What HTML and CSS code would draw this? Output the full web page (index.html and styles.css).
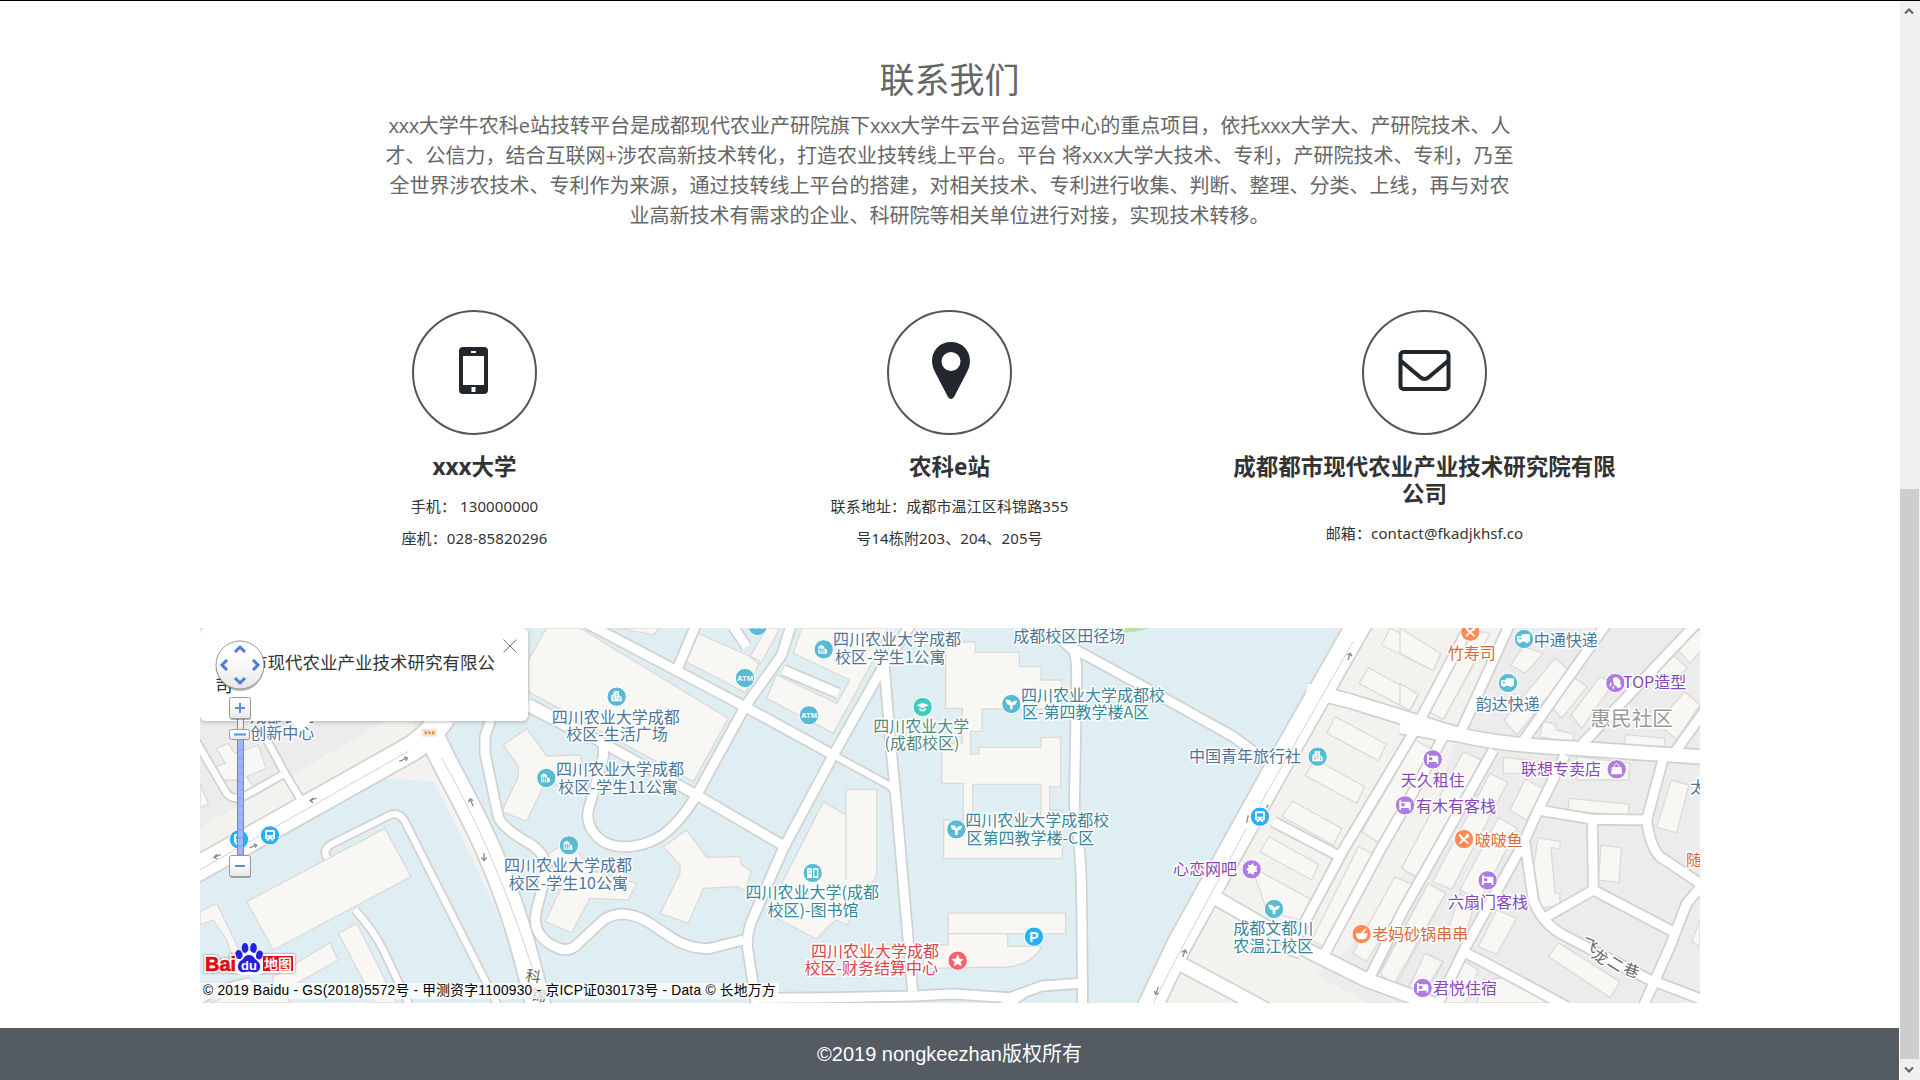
FILE: index.html
```html
<!DOCTYPE html>
<html lang="zh-CN">
<head>
<meta charset="utf-8">
<title>联系我们</title>
<link rel="stylesheet" href="styles.css">
</head>
<body>
<div class="window">
<div class="page">
  <main class="contact">
    <h1 class="contact-title">联系我们</h1>
    <p class="intro"><span class="lat">xxx</span>大学牛农科e站技转平台是成都现代农业产研院旗下<span class="lat">xxx</span>大学牛云平台运营中心的重点项目，依托<span class="lat">xxx</span>大学大、产研院技术、人<br>才、公信力，结合互联网+涉农高新技术转化，打造农业技转线上平台。平台 将xxx大学大技术、专利，产研院技术、专利，乃至<br>全世界涉农技术、专利作为来源，通过技转线上平台的搭建，对相关技术、专利进行收集、判断、整理、分类、上线，再与对农<br>业高新技术有需求的企业、科研院等相关单位进行对接，实现技术转移。</p>
    <div class="cards">
      <section class="card">
        <svg class="card-icon" viewBox="0 0 125 125"><circle cx="62.5" cy="62.5" r="61.5" class="ring"/><path class="ink" fill-rule="evenodd" d="M51 37h21q4 0 4 4v39q0 4-4 4H51q-4 0-4-4V41q0-4 4-4zM51 46v29h21V46zM59 41h5v2h-5zM59.500 77h4v5h-4z"/></svg>
        <h2 class="card-title">xxx大学</h2>
        <p class="card-text">手机： 130000000<br>座机：028-85820296</p>
      </section>
      <section class="card">
        <svg class="card-icon" viewBox="0 0 125 125"><circle cx="62.500" cy="62.500" r="61.500" class="ring"/><path class="ink" fill-rule="evenodd" d="M64 32c11 0 19 8 19 19 0 5-2 9-4 13L67 87q-3 4-6 0L49 64c-2-4-4-8-4-13 0-11 8-19 19-19zM64 42a9.500 9.500 0 1 0 0 19 9.500 9.500 0 0 0 0-19z"/></svg>
        <h2 class="card-title">农科e站</h2>
        <p class="card-text">联系地址：成都市温江区科锦路355<br>号14栋附203、204、205号</p>
      </section>
      <section class="card">
        <svg class="card-icon" viewBox="0 0 125 125"><circle cx="62.500" cy="62.500" r="61.500" class="ring"/><rect class="line-ink" x="38.500" y="42" width="48" height="37" rx="3"/><path class="line-ink" d="M39 51l19 16q4.500 4 9 0l19-16"/></svg>
        <h2 class="card-title">成都都市现代农业产业技术研究院有限<br>公司</h2>
        <p class="card-text">邮箱：contact@fkadjkhsf.co</p>
      </section>
    </div>
  </main>

  <div class="map">
    <svg class="map-canvas" viewBox="0 0 4500 1125">
      <defs>
        <g id="roads">
          <g transform="translate(-30 -24)">
            <path class="w-xl" d="M-20 770L640 400Q710 365 760 290"/>
            <path class="w-xl" d="M725 345C760 430 840 560 900 700C960 840 1000 960 1050 1180"/>
            <path class="w-s" d="M10 350L110 520Q130 545 170 525L285 460L225 350M285 460L345 560"/>
            <path class="w-s" d="M412 715Q395 690 425 672L600 585Q630 575 645 605L925 1160M495 870Q550 930 580 990L660 1160"/>
            <path class="w-s" d="M20 1150Q80 1100 180 1085M1000 258L1200 360"/>
            <path class="w-m" d="M905 290L885 350V400L925 590Q935 620 1000 660Q1060 690 1065 730L1065 770L1040 870Q1025 930 1070 965Q1130 1010 1165 970L1240 900Q1300 860 1380 910L1440 950Q1500 990 1560 985L1660 960"/>
          </g>
          <g transform="translate(900 -24)">
            <path class="w-m" d="M260 10L735 260L1000 405M590 10L530 150M85 250L310 370L590 525L855 680M310 370L310 410L285 500L265 570Q255 625 310 665Q370 695 450 665Q520 640 590 525L735 260L845 105L875 10M850 150L1015 220M700 20L740 80"/>
            <path class="w-m" d="M1235 10L1155 130L1000 405L850 685L765 880Q740 930 742 980L770 1160"/>
            <path class="w-s" d="M1000 405L1165 495Q1190 510 1190 550"/>
          </g>
          <g transform="translate(1980 -24)">
            <path class="w-m" d="M72 130L90 350L110 560L135 850L158 1115"/>
            <path class="w-m" d="M540 5L640 90Q650 110 650 160L643 560Q665 700 665 850L668 1160M640 85L860 205L1120 350L1220 425"/>
            <path class="w-m" d="M-310 1135L-100 1133L160 1128L280 1122L450 1133L545 1098L665 1090M430 1160L490 1120"/>
          </g>
          <g transform="translate(2880 -24)">
            <path class="w-xl" d="M610 -10L340 465L60 970L-35 1170"/>
            <path class="w-l" d="M440 210L570 243L780 308L900 345"/>
            <path class="w-m" d="M930 15L780 300M765 330L550 690L390 990L420 1000M850 350Q770 500 655 700L495 1000M340 605L550 715M855 350Q800 340 765 330"/>
            <path class="w-l" d="M170 835L410 975L620 1080L840 1160M40 1020L320 1170"/>
          </g>
          <g transform="translate(3600 -24)">
            <path class="w-l" d="M0 320L180 345Q300 375 530 385L920 412"/>
            <path class="w-m" d="M330 10L180 340M620 10L365 370M885 15L540 380M930 250L815 410M280 390L140 640L10 870L-90 1070M495 405L410 580L370 670L200 975L110 1160"/>
            <path class="w-m" d="M415 570L580 598L740 600L790 415M740 600Q750 680 780 710L930 810M577 600L580 810L440 890M580 810L820 935M375 670L400 840Q420 900 480 940L740 1075L910 1140M920 780L860 850L810 980L725 1170M180 990L250 1025L500 1160"/>
          </g>
        </g>
        <g id="house"><circle class="dot" r="29"/><path class="glyph" d="M-16-8l9-6 9 6v5l8 4v12h-26z"/><path class="cut" d="M-11-5v17M-5-5v17M1-3v15M-14 2h15"/></g>
        <g id="tower"><circle class="dot" r="29"/><path class="glyph" d="M-16 14V-4l7-4v-8H7v12l8 5v13z"/><path class="cut" d="M-8-4v14M-3-10h6M-3-3h6M-3 4h6M8 0v10"/></g>
        <g id="atm"><circle class="dot" r="29"/><text class="mini" y="8">ATM</text></g>
        <g id="sprout"><circle class="dot" r="29"/><path class="glyph" d="M-17-12C-4-14 0-8 1-2C4-10 10-11 17-9C16 1 9 4 4 3V16H-4V3C-12 3-16-3-17-12z"/></g>
        <g id="hat"><circle class="dot" r="29"/><path class="glyph" d="M0-13L18-5 0 4-18-5zM-10 3L0 8l10-5v6q-10 9-20 0z"/></g>
        <g id="bus"><circle class="dot" r="29"/><path class="glyph" fill-rule="evenodd" d="M-12-16h24l3 3v23h-5v6h-6v-4h-8v4h-6v-6h-5v-23zM-9-10V0H9V-10zM-9 4v4h4V4zM5 4v4h4V4z"/></g>
        <g id="bed"><circle class="dot" r="29"/><path class="glyph" fill-rule="evenodd" d="M-17-15h5v4h24q5 0 5 5V14h-5V8h-24v6h-5zM-11-6V3H-1V-6z"/></g>
        <g id="fork"><circle class="dot" r="29"/><path class="stick" d="M-14-13L13 14M14-14L-13 14M-14-13l10 14M7-15l7 8M15-10l-8 7"/></g>
        <g id="truck"><circle class="dot" r="29"/><path class="glyph" fill-rule="evenodd" d="M-20-8H-8l2-6H18V8h-4q-6 9-10 0H-7q-6 9-10 0h-4V0zM-16-4v5h8v-5z"/></g>
        <g id="bag"><circle class="dot" r="29"/><path class="glyph" d="M-14-7h28l3 22h-34z"/><path class="handle" d="M-7-6v-5q7-12 14 0v5"/><path class="cut" d="M-6 2h2M5 2h2"/></g>
        <g id="bowl"><circle class="dot" r="29"/><path class="glyph" d="M-18-2h36q0 14-11 18h-14q-11-4-11-18zM-2-4L12-17l3 2L6-4z"/></g>
        <g id="gem"><circle class="dot" r="29"/><path class="glyph" d="M-17 0l8-5-3-9 9 2 7-7 3 9 10-1-3 10 3 8-9 1-3 9-8-5-9 1 2-8z"/></g>
      </defs>

      <rect class="campus" width="4500" height="1125"/>
      <path class="town" d="M0 0H760V260L0 700z"/>
      <path class="verge" d="M0 690L640 330V230L0 600zM560 452L700 460Q850 750 940 970L930 800L680 370z"/>
      <path class="verge" d="M3500 0L2845 1125H4500V0z"/>
      <path class="town" d="M3930 0L3740 400L3700 600L3480 930L3350 1040L3500 1125H4500V0z"/>
      <path class="lawn" d="M2685 0H2850Q2790 18 2740 14Q2710 10 2685 0z"/>

      <g class="buildings">
        <g transform="translate(-30 -24)">
          <path d="M170 845L585 625 663 770 250 990zM80 385L115 370 135 400 205 375 228 445 170 470 190 500 165 520 140 480 90 480 80 440 105 430zM30 490L55 550 30 565zM30 875L80 850 145 985 130 1020 110 960 70 900 30 915zM445 940L500 910 620 1149H555zM250 1070L420 968 445 1020 240 1135zM60 1149L190 1100 280 1100 300 1149z"/>
        </g>
        <g transform="translate(900 -24)">
          <path d="M140 24H240L685 295 580 485 85 215V120zM350 24H480L460 44zM575 32L780 122 735 218 545 118zM750 110L800 24H840L780 135zM905 24L880 100 1050 180 1010 250 830 165 800 235 1000 340 1120 120 1160 24z"/>
          <path d="M10 375L80 325 140 408 240 405 260 480 130 500 80 603 5 575 55 470 55 440zM490 680L560 630 620 712 720 710 725 735 755 755 735 810 710 800 610 805 565 910 480 880 540 760 540 735zM140 705L210 660 270 750 410 790 385 840 270 835 215 938 135 905 190 790z"/>
          <path d="M970 545L1038 585V508H1130V765L1040 915 1010 900 990 915 950 957 800 880zM1038 585V780"/>
        </g>
        <g transform="translate(1980 -24)">
          <path d="M257 66H346V97H478V140H543V180H604V267H366V334H332V402H356V382H543V352H602V500H569V570H607V716H251V600H310V490H245V370H307V265H257z"/>
          <path class="court" d="M338 493H543V600H338z"/>
          <path d="M265 879H617V941H443V979H545Q520 1030 445 1041L190 1045V975H265zM265 941H443"/>
        </g>
        <g transform="translate(2880 -24)">
          <path d="M690 24L843 103 820 153 665 75zM625 143L776 225 750 272 597 190zM525 290L679 372 655 422 501 340zM465 417L614 500 590 550 436 467zM397 543L545 625 520 675 366 590zM327 650L476 733 455 780 300 695zM275 740L465 845 430 905 320 870zM765 360L830 395 655 667 605 635zM595 680L645 705 500 985 455 960z"/>
          <path d="M905 430L960 460 775 775 725 745zM705 770L760 795 620 1025 578 1000zM805 790L857 820 705 1100 650 1070zM800 1000L850 1025 810 1100 745 1100zM900 100L950 120 850 298 800 272z"/>
        </g>
        <g transform="translate(3600 -24)">
          <path d="M0 24L122 100 100 152 0 100zM0 190L55 223 30 270 0 255zM215 30L270 40 130 298 80 272zM370 80L430 100 375 160 332 135zM465 115L508 152 350 345 312 300zM510 165L562 200 485 295 450 255zM600 170L640 190 545 325 513 285zM820 105L862 145 790 210 750 180zM900 24L835 90 870 130 905 90zM855 215L900 255 830 358 770 310zM428 305L465 312 470 330 523 342 518 370 420 350zM677 344L795 355 792 384 675 374zM310 412L430 425 425 460 310 460zM190 395L243 420 55 773 5 745zM270 460L323 487 155 808 98 785zM375 478L433 507 380 600 330 570zM295 592L352 625 240 840 180 810zM507 535L687 552 684 588 505 572zM814 480L867 495 830 638 770 622zM603 676L664 683 657 788 595 780zM415 653L481 665 480 688 453 682 465 820H480V855L423 865 400 740zM475 968L660 1085 630 1133 445 1010zM290 870L350 895 290 1003 235 980zM85 790L137 820-20 1095-60 1060zM180 820L225 850 190 960 135 960zM75 1000L128 1025 60 1140 20 1120zM185 1020L235 1050 195 1149H130zM250 1080L330 1070 460 1149H230zM530 410L690 430 685 480H530zM900 900L875 965 900 980z"/>
        </g>
      </g>

      <use href="#roads" class="casing"/>
      <use href="#roads" class="asphalt"/>

      <g class="lane">
        <path d="M0 725L625 370M725 390C850 610 940 830 1030 1125M3460 40L3180 530M3140 600L2935 980L2860 1125"/>
      </g>
      <g class="arrows">
        <path d="M598 400l24-10m-10-3l10 3-4 9M350 510l-20 8m10-8l-10 8 10 6M148 660l22-9m-9-3l9 3-4 8M62 680l-20 8m9-9l-9 9 10 5M820 535l-10-22m-5 10l5-10 10 5M852 675v22m-8-9l8 10 8-10M3444 96l7-20m-10 5l10-5 5 9M2948 987l8-21m-11 7l11-7 5 10M2875 1078l-8 21m-4-11l4 11 10-4M3145 562l-5 22M3205 530l-6 10"/>
      </g>
      <g class="signal"><rect x="665" y="302" width="46" height="24"/><path d="M674 314h7m4 0h7m4 0h7"/></g>

      <g class="labels" transform="translate(-3 -2)">
        <g class="slate" transform="translate(-30 -24)"><text x="280" y="307">成都农业</text><text x="280" y="358">创新中心</text></g>
        <g class="slate" transform="translate(900 -24)">
          <text x="350" y="310">四川农业大学成都</text><text x="354" y="363">校区-生活广场</text>
          <text x="363" y="468">四川农业大学成都</text><text x="357" y="521">校区-学生11公寓</text>
          <text x="207" y="756">四川农业大学成都</text><text x="208" y="809">校区-学生10公寓</text>
          <text x="1194" y="78">四川农业大学成都</text><text x="1174" y="131">校区-学生1公寓</text>
        </g>
        <g class="teal" transform="translate(900 -24)"><text x="940" y="837">四川农业大学(成都</text><text x="942" y="890">校区)-图书馆</text></g>
        <g class="red" transform="translate(900 -24)"><text x="1128" y="1012">四川农业大学成都</text><text x="1117" y="1065">校区-财务结算中心</text></g>
        <g class="slate" transform="translate(1980 -24)"><text x="631" y="69">成都校区田径场</text></g>
        <g class="green" transform="translate(1980 -24)"><text x="187" y="338">四川农业大学</text><text x="189" y="388">(成都校区)</text></g>
        <g class="teal" transform="translate(1980 -24)">
          <text x="702" y="245">四川农业大学成都校</text><text x="680" y="297">区-第四教学楼A区</text>
          <text x="535" y="621">四川农业大学成都校</text><text x="514" y="674">区第四教学楼-C区</text>
        </g>
        <g class="slate" transform="translate(2880 -24)"><text x="258" y="429">中国青年旅行社</text></g>
        <g class="violet" transform="translate(2880 -24)"><text x="138" y="767">心恋网吧</text></g>
        <g class="teal" transform="translate(2880 -24)"><text x="343" y="945">成都文都川</text><text x="343" y="997">农温江校区</text></g>
        <g class="orange" transform="translate(3600 -24)"><text x="218" y="119">竹寿司</text><text x="299" y="680">啵啵鱼</text><text x="64" y="963">老妈砂锅串串</text><text x="885" y="741">随</text></g>
        <g class="slate" transform="translate(3600 -24)"><text x="500" y="79">中通快递</text><text x="326" y="271">韵达快递</text><text x="897" y="520">太</text></g>
        <g class="violet" transform="translate(3600 -24)"><text x="767" y="207">TOP造型</text><text x="486" y="467">联想专卖店</text><text x="101" y="499">天久租住</text><text x="171" y="577">有木有客栈</text><text x="267" y="866">六扇门客栈</text><text x="198" y="1123">君悦住宿</text></g>
        <g class="gray" transform="translate(3600 -24)"><text class="district" x="698" y="321">惠民社区</text></g>
        <g class="street" transform="translate(3600 -24)"><text x="573" y="995" transform="rotate(20 573 980)">飞</text><text x="605" y="1029" transform="rotate(35 605 1010)">龙</text><text x="650" y="1050" transform="rotate(32 650 1033)">二</text><text x="697" y="1070" transform="rotate(20 697 1054)">巷</text><text x="-2597" y="1088" transform="rotate(10 -2597 1070)">科</text><text x="-2580" y="1145" transform="rotate(10 -2580 1125)">锦</text></g>
      </g>

      <g class="pins">
        <g class="cyan">
          <use href="#tower" x="1250" y="206"/><use href="#house" x="1039" y="450"/><use href="#house" x="1107" y="652"/><use href="#house" x="1871" y="64"/>
          <use href="#atm" x="1673" y="-6"/><use href="#atm" x="1635" y="150"/><use href="#atm" x="1827" y="262"/>
          <use href="#sprout" x="2434" y="228"/><use href="#sprout" x="2269" y="604"/><use href="#sprout" x="3222" y="843"/>
          <use href="#tower" x="3353" y="386"/><use href="#truck" x="3972" y="33"/><use href="#truck" x="3924" y="165"/>
          <g transform="translate(1838 735)"><circle class="dot" r="29"/><path class="glyph" fill-rule="evenodd" d="M-17-14H-2V15H-17zM1-14H17V15H1zM5-9V10h8V-9zM-13-8v2h7v-2zM-13 0v2h7V0z"/></g>
        </g>
        <g class="mint"><use href="#hat" x="2168" y="237"/></g>
        <g class="blue"><use href="#bus" x="117" y="634"/><use href="#bus" x="210" y="622"/><use href="#bus" x="3180" y="566"/><g transform="translate(2502 926)"><circle class="dot" r="29"/><text class="parking" y="15">P</text></g></g>
        <g class="coral"><g transform="translate(2273 998)"><circle class="dot" r="29"/><path class="glyph" d="M0-19L6-6 19-5 9 4 12 17 0 10-12 17-9 4-19-5-6-6z"/></g></g>
        <g class="purple">
          <use href="#gem" x="3155" y="724"/><use href="#bed" x="3698" y="394"/><use href="#bed" x="3615" y="532"/><use href="#bed" x="3863" y="757"/><use href="#bed" x="3668" y="1080"/><use href="#bag" x="4250" y="424"/>
          <g transform="translate(4246 165)"><circle class="dot" r="29"/><path class="glyph" d="M-6-15Q8-22 15-5Q14 2 18 11L8 16 3 9Q-8 6-5-1Q-10-8-6-15zM-15-2l4 2-2 10h-5zM-10 10l8 2-4 8z"/></g>
        </g>
        <g class="tangerine"><use href="#fork" x="3811" y="11"/><use href="#fork" x="3792" y="633"/><use href="#bowl" x="3485" y="918"/></g>
      </g>
    </svg>

    <div class="popup">
      <p class="popup-text">成都市现代农业产业技术研究有限公<br>司</p>
      <svg class="popup-close" viewBox="0 0 14 14"><path d="M.5.5l13 13M13.500.5l-13 13"/></svg>
    </div>
    <svg class="popup-tip" viewBox="0 0 22 12"><path d="M0 0h22L11 11z"/></svg>

    <svg class="map-nav" viewBox="0 0 56 244">
      <defs><linearGradient id="key" x2="0" y2="1"><stop offset=".3" stop-color="#fff"/><stop offset="1" stop-color="#e6e6e6"/></linearGradient></defs>
      <circle class="nav-shade" cx="28" cy="30" r="24"/>
      <circle class="nav-key" cx="28" cy="28" r="24"/>
      <path class="nav-chevron" d="M23 15l5-5 5 5M23 41l5 5 5-5M15 23l-5 5 5 5M41 23l5 5-5 5"/>
      <rect class="nav-rail" x="25.500" y="80" width="6" height="22"/>
      <rect class="nav-level" x="25.500" y="98" width="6" height="120"/>
      <path class="nav-ticks" d="M26 113h5M26 121h5M26 129h5M26 137h5M26 145h5M26 153h5M26 161h5M26 169h5M26 177h5M26 185h5M26 193h5M26 201h5M26 209h5"/>
      <rect class="nav-shade" x="18" y="62" width="21" height="21" rx="2"/>
      <rect class="nav-key" x="17.500" y="60.500" width="21" height="21" rx="2"/>
      <rect class="nav-key" x="17.500" y="92.500" width="20" height="10" rx="2"/>
      <rect class="nav-shade" x="18" y="220" width="21" height="21" rx="2"/>
      <rect class="nav-key" x="17.500" y="218.500" width="21" height="21" rx="2"/>
      <path class="nav-sign" d="M23 71h10M28 66v10M22 97.500h12M23 229h10"/>
    </svg>

    <svg class="baidu" viewBox="0 0 96 34">
      <g class="baidu-halo"><text class="logo-bai" x="4" y="30" textLength="31" lengthAdjust="spacingAndGlyphs">Bai</text><path d="M38 19q10-14 20 0 8 13-3 13H41q-10-1-3-13z"/><rect x="62" y="15" width="30" height="15"/></g>
      <text class="logo-bai" x="4" y="30" textLength="31" lengthAdjust="spacingAndGlyphs">Bai</text>
      <g class="paw"><ellipse cx="38" cy="13.500" rx="3.300" ry="4.500" transform="rotate(-20 38 13.500)"/><ellipse cx="44" cy="7" rx="3.300" ry="5"/><ellipse cx="52.500" cy="7" rx="3.300" ry="5"/><ellipse cx="58.500" cy="14" rx="3.300" ry="4.500" transform="rotate(15 58.500 14)"/><path d="M48 14q4 0 6 4 6 4 5 9-1 5-7 4-4-1-8 0-6 1-7-4-1-5 5-9 2-4 6-4z"/></g>
      <text class="logo-du" x="48" y="29">du</text>
      <rect class="logo-box" x="62" y="15" width="30" height="15"/><text class="logo-map" x="77" y="27.500">地图</text>
    </svg>
    <div class="copyright">© 2019 Baidu - GS(2018)5572号 - 甲测资字1100930 - 京ICP证030173号 - Data © 长地万方</div>
  </div>

  <footer class="footer">©2019 nongkeezhan版权所有</footer>
</div>
<div class="scrollbar">
  <svg class="scroll-arrow" viewBox="0 0 10 7"><path d="M1 5.500l4-4 4 4"/></svg>
  <div class="thumb"></div>
  <svg class="scroll-arrow" viewBox="0 0 10 7"><path d="M1 1.500l4 4 4-4"/></svg>
</div>
</div>
</body>
</html>
```
FILE: styles.css
```css
* { box-sizing: border-box; }
body { margin: 0; background: #fff; color: #333; font-family: "Noto Sans", "Noto Sans CJK SC", sans-serif; }
h1, h2, p { margin: 0; }
svg { display: block; }

.window { display: flex; height: 1080px; border-top: 1px solid #000; overflow: hidden; }
.page { width: 1899px; display: flex; flex-direction: column; }

.contact { height: 627px; padding-top: 60px; text-align: center; }
.contact-title { font-size: 35px; line-height: 38px; font-weight: 400; color: #666; }
.intro { margin-top: 12px; font-size: 20px; line-height: 30px; color: #666; white-space: nowrap; font-family: "Open Sans", "Noto Sans CJK SC", sans-serif; }
.lat { letter-spacing: -.4px; }

.cards { display: grid; grid-template-columns: repeat(3, 475px); justify-content: center; margin-top: 79px; }
.card { display: flex; flex-direction: column; align-items: center; white-space: nowrap; }
.card-icon { width: 125px; height: 125px; }
.ring { fill: none; stroke: #555; stroke-width: 2; }
.ink { fill: #22272e; }
.line-ink { fill: none; stroke: #22272e; stroke-width: 4; }
.card-title { margin-top: 18px; font-size: 22.500px; line-height: 27px; font-weight: 700; }
.card-text { margin-top: 10px; font-size: 15px; line-height: 32px; letter-spacing: .12px; }

.map { position: relative; width: 1500px; height: 375px; margin-left: 200px; overflow: hidden; }
.map-canvas { width: 1500px; height: 375px; }
.campus { fill: #deeef3; }
.town { fill: #ececec; }
.verge { fill: #f3f2ef; }
.lawn { fill: #b5e4a5; }
.buildings { fill: #f8f7f4; stroke: #dddad8; stroke-width: 4; stroke-linejoin: round; }
.court { fill: #deeef3; }
.casing { --edge: 10px; stroke: #d0d0d0; fill: none; stroke-linejoin: round; }
.asphalt { --edge: 0px; stroke: #fff; fill: none; stroke-linejoin: round; }
.w-s { stroke-width: calc(19px + var(--edge)); }
.w-m { stroke-width: calc(27px + var(--edge)); }
.w-l { stroke-width: calc(40px + var(--edge)); }
.w-xl { stroke-width: calc(72px + var(--edge)); }
.lane { fill: none; stroke: #d2d2d2; stroke-width: 3; }
.arrows { fill: none; stroke: #8b8b8b; stroke-width: 4; }
.signal rect { fill: #f0e6d5; }
.signal path { stroke: #dd942e; stroke-width: 9; }

.labels text { font: 400 48px "Noto Sans CJK SC", sans-serif; text-anchor: middle; paint-order: stroke; stroke: #fff; stroke-width: 9px; stroke-linejoin: round; }
.labels .district { font-size: 62px; }
.labels .street text { font-size: 46px; }
.slate { fill: #4d7599; }
.teal { fill: #35879b; }
.green { fill: #4f8a80; }
.red { fill: #d9444b; }
.violet { fill: #8646b5; }
.orange { fill: #d8693a; }
.gray { fill: #999; }
.street { fill: #666; }

.dot { stroke: #fff; stroke-width: 3; }
.cyan { fill: #58bad3; --pin: #58bad3; }
.mint { fill: #3eccc0; --pin: #3eccc0; }
.blue { fill: #28aefa; --pin: #28aefa; }
.coral { fill: #f9626d; --pin: #f9626d; }
.purple { fill: #ae7be2; --pin: #ae7be2; }
.tangerine { fill: #ff8a54; --pin: #ff8a54; }
.glyph { fill: #fff; }
.cut { stroke: var(--pin); stroke-width: 2.500; fill: none; }
.stick { stroke: #fff; stroke-width: 5; fill: none; }
.handle { stroke: #fff; stroke-width: 3; fill: none; }
.mini { fill: #fff; font: 700 23px "Liberation Sans", sans-serif; text-anchor: middle; }
.parking { fill: #fff; font: 700 42px "Liberation Sans", sans-serif; text-anchor: middle; }

.popup { position: absolute; left: 0; top: 0; width: 328px; height: 93px; padding: 23px 15px; background: #fff; border-radius: 6px; box-shadow: 0 1px 4px rgba(0, 0, 0, .25); }
.popup-text { font-size: 17.500px; line-height: 22.500px; white-space: nowrap; color: #333; }
.popup-close { position: absolute; right: 11px; top: 11px; width: 14px; height: 14px; fill: none; stroke: #777; }
.popup-tip { position: absolute; left: 90px; top: 92px; width: 22px; height: 12px; fill: #fff; }
.map-nav { position: absolute; left: 11.500px; top: 8.500px; width: 56px; height: 244px; }
.nav-shade { fill: rgba(0, 0, 0, .3); }
.nav-key { fill: url(#key); stroke: #999; }
.nav-chevron { fill: none; stroke: #4c7bdc; stroke-width: 3; }
.nav-rail { fill: #eee; stroke: #888; }
.nav-level { fill: #97b8fb; stroke: #888; }
.nav-ticks { stroke: #779be0; stroke-width: .8; }
.nav-sign { fill: none; stroke: #5b8aed; stroke-width: 2; }
.baidu { position: absolute; left: 1px; top: 313px; width: 96px; height: 34px; }
.baidu-halo { fill: #fff; stroke: #fff; stroke-width: 4; filter: drop-shadow(0 0 1px #777); }
.logo-bai { font: 700 20px "Liberation Sans", sans-serif; }
.baidu > .logo-bai { fill: #e10b12; stroke: #e10b12; stroke-width: .6; }
.paw { fill: #2520de; }
.logo-du { fill: #fff; font: 700 13px "Liberation Sans", sans-serif; text-anchor: middle; }
.logo-box { fill: #e10b12; }
.logo-map { fill: #fff; font: 700 14px "Noto Sans CJK SC", sans-serif; text-anchor: middle; }
.copyright { position: absolute; left: 0; bottom: 4px; height: 16px; padding: 0 3px; background: rgba(255, 255, 255, .7); font: 13.750px/16px "Liberation Sans", "Noto Sans CJK SC", sans-serif; letter-spacing: .24px; color: #000; white-space: nowrap; }

.footer { height: 52px; margin-top: 25px; background: #555b63; color: #fff; text-align: center; font: 20px/52px "Liberation Sans", "Noto Sans CJK SC", sans-serif; }

.scrollbar { width: 21px; padding: 7px 1px 7px; background: #f0f0f0; border-left: 1px solid #fff; display: flex; flex-direction: column; align-items: center; }
.scroll-arrow { width: 10px; height: 7px; fill: none; stroke: #606060; stroke-width: 2; margin-right: 2px; flex: none; }
.thumb { width: 19px; height: 570px; margin: auto 0 7px -1px; background: #cdcdcd; flex: none; }
```
